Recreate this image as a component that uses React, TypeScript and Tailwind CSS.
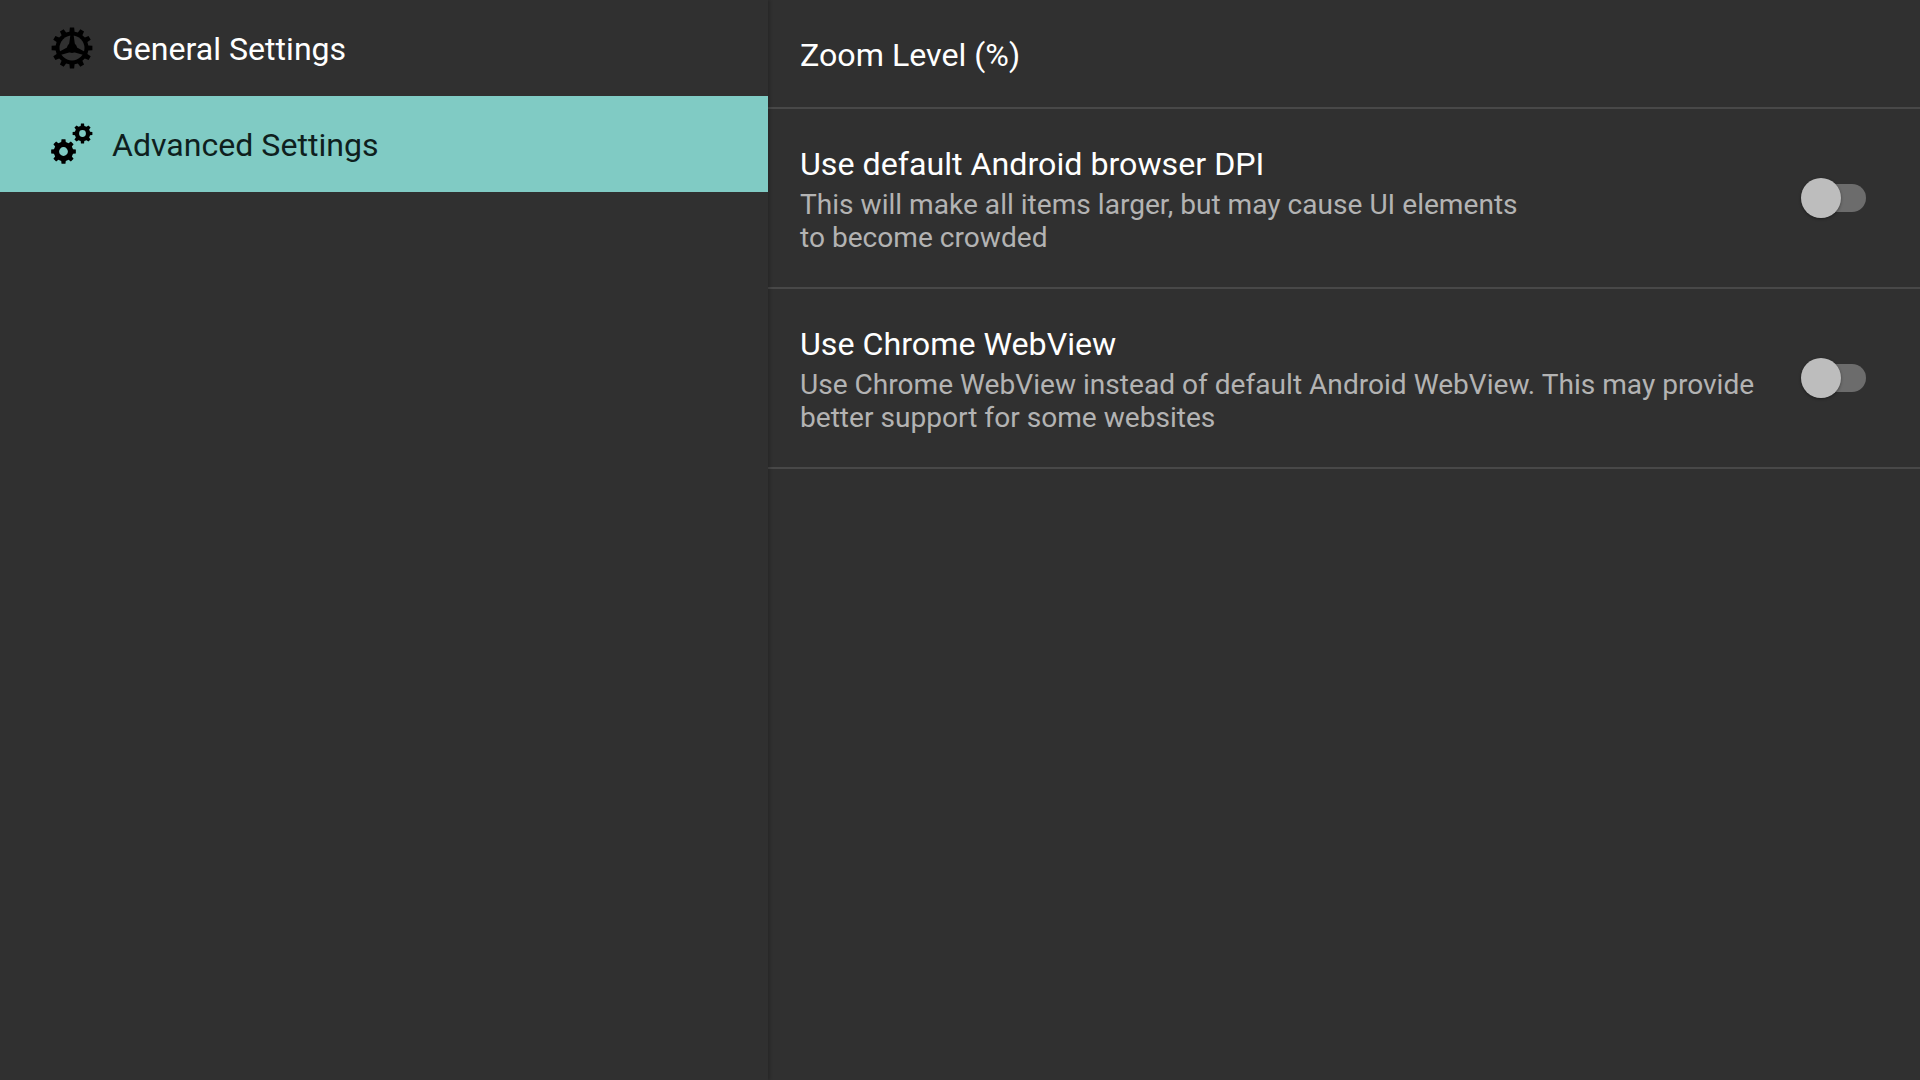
import React from "react";

// builds a cog outline, teeth are flat topped
function cogPath(cx: number, cy: number, outer: number, inner: number, teeth: number) {
  const pts: string[] = [];
  const step = (Math.PI * 2) / teeth;
  for (let i = 0; i < teeth; i++) {
    const a = i * step - Math.PI / 2;
    const list: [number, number][] = [
      [inner, a - step * 0.3],
      [outer, a - step * 0.2],
      [outer, a + step * 0.2],
      [inner, a + step * 0.3],
    ];
    list.forEach(([r, t]) => {
      pts.push(`${(cx + r * Math.cos(t)).toFixed(2)} ${(cy + r * Math.sin(t)).toFixed(2)}`);
    });
  }
  return `M${pts.join("L")}Z`;
}

function GeneralIcon() {
  return (
    <svg width="42" height="42" viewBox="0 0 42 42" className="shrink-0">
      <path d={cogPath(21, 21, 20.5, 16.5, 12)} fill="#000" />
      <circle cx="21" cy="21" r="12.5" fill="#303030" />
      <circle cx="21" cy="21" r="5" fill="#000" />
      <path d="M19.4 8h3.2l1.4 10h-6zM8.5 28.2l-1.6-2.8 10-5.5 3 5zM33.5 28.2l1.6-2.8-10-5.5-3 5z" fill="#000" />
    </svg>
  );
}

function AdvancedIcon() {
  return (
    <svg width="42" height="42" viewBox="0 0 42 42" className="shrink-0">
      <path
        fillRule="evenodd"
        d={`${cogPath(12.5, 28.5, 12.5, 9.8, 8)}M12.5 24.1a4.4 4.4 0 1 0 0 8.8a4.4 4.4 0 1 0 0-8.8Z`}
        fill="#000"
      />
      <path
        fillRule="evenodd"
        d={`${cogPath(31.5, 10.5, 10, 7.8, 8)}M31.5 7.1a3.4 3.4 0 1 0 0 6.8a3.4 3.4 0 1 0 0-6.8Z`}
        fill="#000"
      />
    </svg>
  );
}

function SidebarItem({
  icon,
  label,
  active = false,
}: {
  icon: React.ReactNode;
  label: string;
  active?: boolean;
}) {
  return (
    <div
      className={`flex h-24 items-center gap-[19px] pl-[51px] text-[32.1px] ${
        active ? "bg-[#80cbc4] text-[#0f1f1e]" : "text-white"
      }`}
    >
      {icon}
      <span className="pt-[2px]">{label}</span>
    </div>
  );
}

function Toggle() {
  return (
    <div className="relative h-10 w-[65px] shrink-0">
      <div className="absolute right-0 top-[6px] h-7 w-[56px] rounded-full bg-[#6c6c6c]" />
      <div className="absolute left-0 top-0 h-10 w-10 rounded-full bg-[#bdbdbd] shadow-[0_1px_3px_rgba(0,0,0,0.4)]" />
    </div>
  );
}

function SettingRow({ title, lines }: { title: string; lines: string[] }) {
  return (
    <div className="flex h-[180px] items-center justify-between border-b-2 border-[#484848] pl-8 pr-[54px]">
      <div className="pt-[2px]">
        <div className="text-[32.2px] leading-[38px] text-white">{title}</div>
        <div className="mt-[5px] text-[28.1px] leading-[33px] text-[#b3b3b3]">
          {lines.map((l) => (
            <div key={l}>{l}</div>
          ))}
        </div>
      </div>
      <Toggle />
    </div>
  );
}

export default function App() {
  return (
    <div className="flex h-screen bg-[#303030] font-['Roboto',sans-serif]">
      {/* Left menu */}
      <aside className="relative z-10 w-[768px] shrink-0 bg-[#303030] shadow-[2px_0_3px_rgba(0,0,0,0.2)]">
        <SidebarItem icon={<GeneralIcon />} label="General Settings" />
        <SidebarItem icon={<AdvancedIcon />} label="Advanced Settings" active />
      </aside>

      {/* Settings list */}
      <main className="flex-1">
        <div className="flex h-[109px] items-center border-b-2 border-[#484848] pl-8 pt-1 text-[32.2px] text-white">
          Zoom Level (%)
        </div>
        <SettingRow
          title="Use default Android browser DPI"
          lines={[
            "This will make all items larger, but may cause UI elements",
            "to become crowded",
          ]}
        />
        <SettingRow
          title="Use Chrome WebView"
          lines={[
            "Use Chrome WebView instead of default Android WebView. This may provide",
            "better support for some websites",
          ]}
        />
      </main>
    </div>
  );
}
